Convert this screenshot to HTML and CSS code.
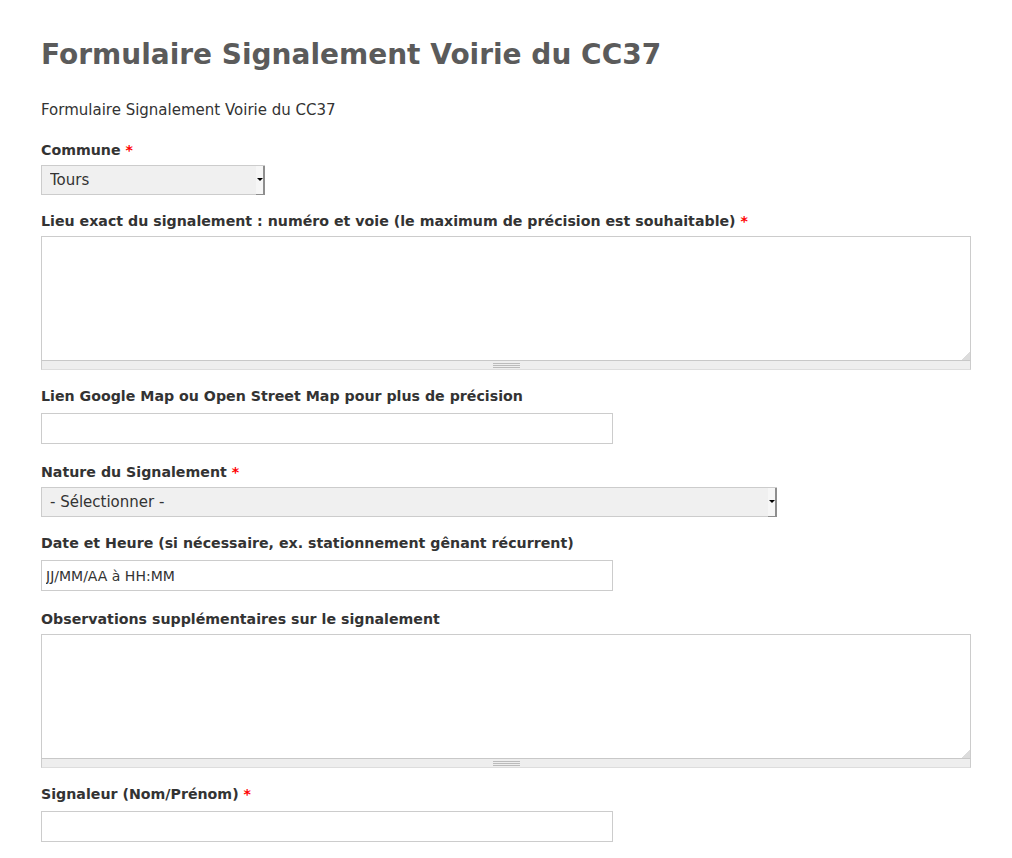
FILE: index.html
```html
<!DOCTYPE html>
<html lang="fr">
<head>
<meta charset="utf-8">
<title>Formulaire Signalement Voirie du CC37</title>
<link rel="stylesheet" href="styles.css">
</head>
<body>
<main class="page">
  <h1 class="title">Formulaire Signalement Voirie du CC37</h1>
  <p class="intro">Formulaire Signalement Voirie du CC37</p>
  <form class="form">
    <div class="item">
      <label class="label" for="commune">Commune <span class="req">*</span></label>
      <div class="select-wrap select-short">
        <select id="commune" class="select"><option>Tours</option></select>
        <span class="arrow"></span>
      </div>
    </div>
    <div class="item">
      <label class="label" for="lieu">Lieu exact du signalement : numéro et voie (le maximum de précision est souhaitable) <span class="req">*</span></label>
      <div class="ta-wrap">
        <textarea id="lieu" class="textarea"></textarea>
        <span class="resizer"></span>
        <div class="grippie"><span class="grip-lines"></span></div>
      </div>
    </div>
    <div class="item">
      <label class="label" for="lien">Lien Google Map ou Open Street Map pour plus de précision</label>
      <input id="lien" class="input" type="text">
    </div>
    <div class="item">
      <label class="label" for="nature">Nature du Signalement <span class="req">*</span></label>
      <div class="select-wrap select-long">
        <select id="nature" class="select"><option>- Sélectionner -</option></select>
        <span class="arrow"></span>
      </div>
    </div>
    <div class="item">
      <label class="label" for="date">Date et Heure (si nécessaire, ex. stationnement gênant récurrent)</label>
      <input id="date" class="input" type="text" value="JJ/MM/AA à HH:MM">
    </div>
    <div class="item">
      <label class="label" for="obs">Observations supplémentaires sur le signalement</label>
      <div class="ta-wrap">
        <textarea id="obs" class="textarea"></textarea>
        <span class="resizer"></span>
        <div class="grippie"><span class="grip-lines"></span></div>
      </div>
    </div>
    <div class="item">
      <label class="label" for="nom">Signaleur (Nom/Prénom) <span class="req">*</span></label>
      <input id="nom" class="input" type="text">
    </div>
  </form>
</main>
</body>
</html>
```
FILE: styles.css
```css
html, body {
  margin: 0;
  padding: 0;
  background: #fff;
}
body {
  font-family: "DejaVu Sans", sans-serif;
  color: #3b3b3b;
  font-size: 15px;
}
.page {
  padding: 0 41px;
}
.title {
  margin: 0;
  padding-top: 35px;
  font-size: 28px;
  line-height: 40px;
  font-weight: bold;
  color: #5b5b5b;
}
.intro {
  margin: 25px 0 0 0;
  font-size: 15px;
  line-height: 20px;
  color: #333;
}
.form {
  display: flex;
  flex-direction: column;
  gap: 16px;
  margin-top: 20px;
}
.item {
  display: flex;
  flex-direction: column;
  align-items: flex-start;
}
.label {
  font-weight: bold;
  font-size: 14.2px;
  line-height: 20px;
  color: #333;
  margin-bottom: 5px;
}
.req {
  color: #f00;
}
.select-wrap {
  position: relative;
  height: 30px;
}
.select-short { width: 224px; }
.select-long { width: 736px; }
.select {
  appearance: none;
  -webkit-appearance: none;
  box-sizing: border-box;
  width: 100%;
  height: 30px;
  margin: 0;
  border: 1px solid #ccc;
  border-radius: 0;
  background: #f0f0f0;
  font-family: "DejaVu Sans", sans-serif;
  font-size: 15px;
  color: #333;
  padding: 0 0 0 8px;
}
.arrow {
  position: absolute;
  right: 0;
  top: 1px;
  bottom: 0;
  width: 7px;
  background: #f6f6f6;
  border-right: 2px solid #8e8e8e;
  border-bottom: 1px solid #8e8e8e;
}
.arrow::after {
  content: "";
  position: absolute;
  left: 1px;
  top: 12px;
  border-left: 3px solid transparent;
  border-right: 3px solid transparent;
  border-top: 3px solid #000;
}
.ta-wrap {
  position: relative;
  width: 930px;
  display: flex;
  flex-direction: column;
}
.textarea {
  box-sizing: border-box;
  width: 100%;
  height: 124px;
  margin: 0;
  border: 1px solid #ccc;
  border-bottom: 0;
  border-radius: 0;
  resize: none;
  font-family: "DejaVu Sans", sans-serif;
  font-size: 14px;
  display: block;
}
.resizer {
  position: absolute;
  right: 1px;
  bottom: 10px;
  width: 8px;
  height: 8px;
  background:
    linear-gradient(135deg, transparent 0 49%, #dcdcdc 50% 100%);
}
.grippie {
  box-sizing: border-box;
  height: 10px;
  background: #eee;
  border: 1px solid #ccc;
  border-top-color: #c8c8c8;
  border-bottom-color: #ddd;
  display: flex;
  justify-content: center;
  align-items: center;
}
.grip-lines {
  width: 27px;
  height: 5px;
  box-sizing: border-box;
  border-top: 1px solid #bbb;
  border-bottom: 1px solid #bbb;
  background: linear-gradient(#bbb, #bbb) 0 1px / 100% 1px no-repeat;
}
.input {
  box-sizing: border-box;
  width: 572px;
  height: 31px;
  margin: 2px 0;
  border: 1px solid #ccc;
  border-radius: 0;
  padding: 0 4px;
  font-family: "DejaVu Sans", sans-serif;
  font-size: 14px;
  color: #333;
  background: #fff;
}
```
